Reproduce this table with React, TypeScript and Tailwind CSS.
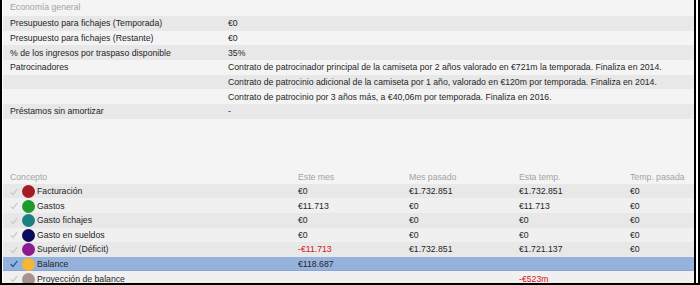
import React from "react";

const font = { fontFamily: '"Liberation Sans", Arial, sans-serif' };

const topRows: [string, string, boolean][] = [
  ["Presupuesto para fichajes (Temporada)", "€0", true],
  ["Presupuesto para fichajes (Restante)", "€0", false],
  ["% de los ingresos por traspaso disponible", "35%", true],
  ["Patrocinadores", "Contrato de patrocinador principal de la camiseta por 2 años valorado en €721m la temporada. Finaliza en 2014.", false],
  ["", "Contrato de patrocinio adicional de la camiseta por 1 año, valorado en €120m por temporada. Finaliza en 2014.", true],
  ["", "Contrato de patrocinio por 3 años más, a €40,06m por temporada. Finaliza en 2016.", false],
  ["Préstamos sin amortizar", "-", true],
];

type BRow = { label: string; color: string; vals: string[]; red?: number[]; dark: boolean; sel?: boolean };

const bottomRows: BRow[] = [
  { label: "Facturación", color: "#a51c24", vals: ["€0", "€1.732.851", "€1.732.851", "€0"], dark: true },
  { label: "Gastos", color: "#1f9a2c", vals: ["€11.713", "€0", "€11.713", "€0"], dark: false },
  { label: "Gasto fichajes", color: "#1c7f82", vals: ["€0", "€0", "€0", "€0"], dark: true },
  { label: "Gasto en sueldos", color: "#0b0b5c", vals: ["€0", "€0", "€0", "€0"], dark: false },
  { label: "Superávit/ (Déficit)", color: "#8e1a90", vals: ["-€11.713", "€1.732.851", "€1.721.137", "€0"], red: [0], dark: true },
  { label: "Balance", color: "#f6b534", vals: ["€118.687", "", "", ""], dark: false, sel: true },
  { label: "Proyección de balance", color: "#a89191", vals: ["", "", "-€523m", ""], red: [2], dark: false },
];

function Check({ sel }: { sel?: boolean }) {
  return (
    <svg width="8" height="8" viewBox="0 0 8 8" className="shrink-0">
      <path d="M1 4.6 L3 6.6 L7 1.4" fill="none" stroke={sel ? "#2a5ea6" : "#c8c8c8"} strokeWidth={sel ? 1.4 : 1.2} strokeLinecap="round" strokeLinejoin="round" />
    </svg>
  );
}

export default function App() {
  return (
    <div className="w-[700px] h-[285px] bg-white border-l-2 border-r-2 border-b-2 border-black overflow-hidden" style={font}>
      <div className="ml-[1px] mr-[2px] h-[283px] border-r-2 border-black bg-[#f4f4f4] overflow-hidden text-[8.7px] text-[#262626]">
        <div className="h-[16px] flex items-center pl-[7px] text-[#a3a3a3]">Economía general</div>
        {topRows.map(([a, b, d], i) => (
          <div key={i} className={`h-[14.7px] pt-px flex items-center ${d ? "bg-[#e8e8e8]" : "bg-[#f4f4f4]"}`}>
            <div className="w-[225px] pl-[7px] shrink-0">{a}</div>
            <div className="whitespace-nowrap">{b}</div>
          </div>
        ))}
        <div className="h-[50px]" />
        <div className="h-[15px] pt-[2px] flex items-center text-[#a3a3a3]">
          <div className="w-[295px] pl-[7px] shrink-0">Concepto</div>
          <div className="w-[111px] shrink-0">Este mes</div>
          <div className="w-[110px] shrink-0">Mes pasado</div>
          <div className="w-[111px] shrink-0">Esta temp.</div>
          <div>Temp. pasada</div>
        </div>
        {bottomRows.map((r, i) => (
          <div
            key={i}
            className={`h-[14.6px] pt-px flex items-center ${r.sel ? "bg-[#95b2dc] border-b border-[#8aa5cf]" : r.dark ? "bg-[#e8e8e8]" : "bg-[#f0f0f0]"}`}
          >
            <div className="w-[295px] pl-[7px] shrink-0 flex items-center">
              <Check sel={r.sel} />
              <span className="ml-[4px] w-[13px] h-[13px] rounded-full shrink-0" style={{ backgroundColor: r.color }} />
              <span className="ml-[2px]">{r.label}</span>
            </div>
            {r.vals.map((v, j) => (
              <div
                key={j}
                className={`${j === 0 ? "w-[111px]" : j === 1 ? "w-[110px]" : j === 2 ? "w-[111px]" : ""} shrink-0 ${r.red && r.red.includes(j) ? "text-[#d31414]" : ""}`}
              >
                {v}
              </div>
            ))}
          </div>
        ))}
      </div>
    </div>
  );
}
